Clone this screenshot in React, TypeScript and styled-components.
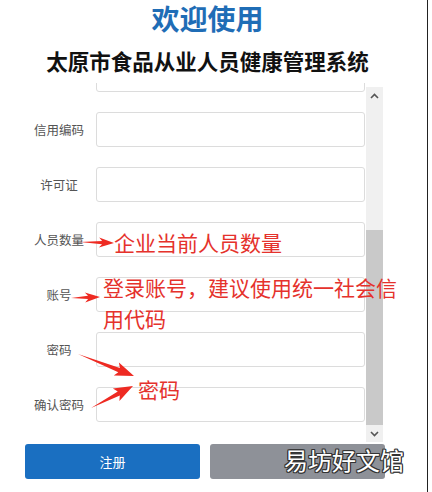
import React, { useLayoutEffect, useRef } from "react";
import styled, { createGlobalStyle } from "styled-components";

const GlobalStyle = createGlobalStyle`
  html, body {
    margin: 0;
    padding: 0;
    background: #fff;
  }
  * { box-sizing: border-box; }
`;

const FONT = `"Noto Sans CJK SC", "Noto Sans", sans-serif`;

// 页面外框
const Page = styled.div`
  position: relative;
  width: 428px;
  height: 492px;
  border-right: 1px solid #222;
  font-family: ${FONT};
  overflow: hidden;
`;

const Header = styled.header`
  padding-right: 12px;
  text-align: center;
`;

const Welcome = styled.h1`
  margin: 0;
  height: 36px;
  line-height: 36px;
  font-size: 28px;
  font-weight: 700;
  color: #1f6db6;
`;

const SystemName = styled.h2`
  margin: 10px 0 0;
  height: 30px;
  line-height: 30px;
  font-size: 21.5px;
  font-weight: 700;
  color: #111;
`;

const Panel = styled.div`
  display: flex;
  margin-top: 7px;
  height: 359px;
  width: 383px;
`;

const Viewport = styled.div`
  flex: 1;
  overflow-y: scroll;
  scrollbar-width: none;
  &::-webkit-scrollbar { display: none; }
`;

const FormBody = styled.div`
  padding-bottom: 20px;
`;

const Row = styled.div`
  display: grid;
  grid-template-columns: 84px 269px;
  column-gap: 12px;
  align-items: center;
  height: 35px;
  margin-bottom: 20px;
`;

const Label = styled.label`
  padding-left: 34px;
  text-align: center;
  font-size: 12.5px;
  color: #555;
  white-space: nowrap;
`;

const Field = styled.input`
  width: 100%;
  height: 35px;
  border: 1px solid #dcdcdc;
  border-radius: 3px;
  background: #fff;
  outline: none;
  font-family: ${FONT};
`;

// 仿滚动条
const ScrollBar = styled.div`
  width: 17px;
  margin-top: 4px;
  display: flex;
  flex-direction: column;
  background: #f0f0f0;
`;

const ScrollButton = styled.div`
  height: 17px;
  display: flex;
  align-items: center;
  justify-content: center;
`;

const Track = styled.div`
  flex: 1;
  display: flex;
  flex-direction: column;
  justify-content: flex-end;
`;

const Thumb = styled.div`
  height: 195px;
  background: #c9c9c9;
`;

const Buttons = styled.div`
  display: flex;
  gap: 10px;
  padding-left: 25px;
  margin-top: 2px;
`;

const Button = styled.button<{ $tone: "primary" | "muted" }>`
  width: 175px;
  height: 35px;
  border: none;
  border-radius: 3px;
  background: ${(p) => (p.$tone === "primary" ? "#1a6fc1" : "#8e9198")};
  color: #fff;
  font-family: ${FONT};
  font-size: 13px;
`;

// 标注层
const Overlay = styled.svg`
  position: absolute;
  inset: 0;
  pointer-events: none;
`;

const Note = styled.div<{ $x: number; $y: number; $w?: number }>`
  position: absolute;
  left: ${(p) => p.$x}px;
  top: ${(p) => p.$y}px;
  width: ${(p) => (p.$w ? `${p.$w}px` : "auto")};
  font-size: 21px;
  line-height: 31px;
  color: #e5322c;
  white-space: ${(p) => (p.$w ? "normal" : "nowrap")};
  pointer-events: none;
`;

const Watermark = styled.div`
  position: absolute;
  left: 284px;
  top: 445px;
  font-size: 24px;
  line-height: 30px;
  color: #fff;
  text-shadow: 1px 1px 0 #333, -1px -1px 0 #333, 1px -1px 0 #333, -1px 1px 0 #333,
    0 1px 0 #333, 1px 0 0 #333, 0 -1px 0 #333, -1px 0 0 #333;
`;

const fields = ["企业名称", "企业地址", "信用编码", "许可证", "人员数量", "账号", "密码", "确认密码"];

const Chevron = ({ up }: { up?: boolean }) => (
  <svg width="9" height="6" viewBox="0 0 9 6">
    <path
      d={up ? "M1 5 L4.5 1.5 L8 5" : "M1 1 L4.5 4.5 L8 1"}
      fill="none"
      stroke="#555"
      strokeWidth="1.6"
    />
  </svg>
);

// 红色箭头：尾部细、头部宽
function arrowPoints(x1: number, y1: number, x2: number, y2: number, head: number, hw: number, bw: number) {
  const dx = x2 - x1;
  const dy = y2 - y1;
  const len = Math.hypot(dx, dy);
  const ux = dx / len;
  const uy = dy / len;
  const nx = -uy;
  const ny = ux;
  const at = (u: number, v: number) => `${(x1 + ux * u + nx * v).toFixed(1)},${(y1 + uy * u + ny * v).toFixed(1)}`;
  return [
    at(0, 0),
    at(len - head, -bw),
    at(len - head - 3, -hw),
    at(len, 0),
    at(len - head - 3, hw),
    at(len - head, bw),
  ].join(" ");
}

const arrows = [
  [80, 242, 114, 243, 12, 5, 1.6],
  [71, 298, 100, 297, 12, 5, 1.6],
  [78, 354, 134, 376, 16, 7, 2.2],
  [91, 408, 133, 386, 16, 7, 2.2],
] as const;

export default function App() {
  const viewRef = useRef<HTMLDivElement>(null);

  useLayoutEffect(() => {
    // 信用编码 行顶部对齐到 y≈112
    if (viewRef.current) viewRef.current.scrollTop = 81;
  }, []);

  return (
    <Page>
      <GlobalStyle />
      <Header>
        <Welcome>欢迎使用</Welcome>
        <SystemName>太原市食品从业人员健康管理系统</SystemName>
      </Header>

      <Panel>
        <Viewport ref={viewRef}>
          <FormBody>
            {fields.map((name) => (
              <Row key={name}>
                <Label>{name}</Label>
                <Field type={name.includes("密码") ? "password" : "text"} />
              </Row>
            ))}
          </FormBody>
        </Viewport>
        <ScrollBar>
          <ScrollButton>
            <Chevron up />
          </ScrollButton>
          <Track>
            <Thumb />
          </Track>
          <ScrollButton>
            <Chevron />
          </ScrollButton>
        </ScrollBar>
      </Panel>

      <Buttons>
        <Button $tone="primary">注册</Button>
        <Button $tone="muted" />
      </Buttons>

      <Overlay width="428" height="492" viewBox="0 0 428 492">
        {arrows.map((a, i) => (
          <polygon key={i} points={arrowPoints(a[0], a[1], a[2], a[3], a[4], a[5], a[6])} fill="#ee2a22" />
        ))}
      </Overlay>
      <Note $x={114} $y={227}>企业当前人员数量</Note>
      <Note $x={103} $y={272} $w={300}>登录账号，建议使用统一社会信用代码</Note>
      <Note $x={138} $y={374}>密码</Note>
      <Watermark>易坊好文馆</Watermark>
    </Page>
  );
}
